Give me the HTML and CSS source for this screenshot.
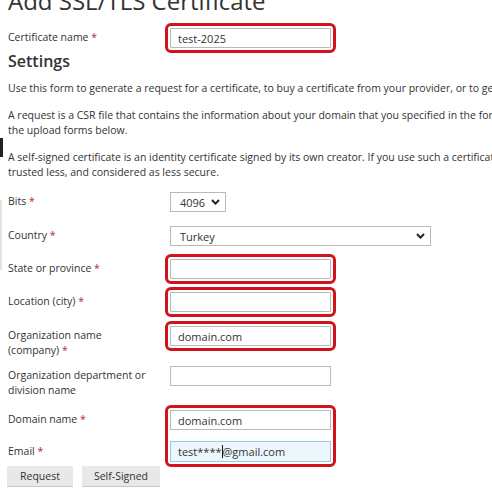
FILE: index.html
```html
<!DOCTYPE html>
<html>
<head>
<meta charset="utf-8">
<link rel="stylesheet" href="styles.css">
</head>
<body>
<div class="page">
  <h1 class="title">Add SSL/TLS Certificate</h1>

  <div class="form-grid top-grid">
    <label class="label">Certificate name <span class="req">*</span></label>
    <div class="field"><input class="input marked" type="text" value="test-2025"></div>
  </div>

  <h2 class="section">Settings</h2>

  <p class="text">Use this form to generate a request for a certificate, to buy a certificate from your provider, or to generate a self-signed certificate.</p>
  <p class="text">A request is a CSR file that contains the information about your domain that you specified in the form. You can submit it to a certificate authority,<br>the upload forms below.</p>
  <p class="text text-flag">A self-signed certificate is an identity certificate signed by its own creator. If you use such a certificate, your site visitors may see a warning that it is<br>trusted less, and considered as less secure.</p>

  <div class="form-grid main-grid">
    <label class="label">Bits <span class="req">*</span></label>
    <div class="field">
      <div class="select select-small"><span>4096</span>
        <svg class="chev" width="9" height="6" viewBox="0 0 9 6"><path d="M1 1 L4.5 4.6 L8 1" fill="none" stroke="#222" stroke-width="2"/></svg>
      </div>
    </div>

    <label class="label">Country <span class="req">*</span></label>
    <div class="field">
      <div class="select select-wide"><span>Turkey</span>
        <svg class="chev" width="9" height="6" viewBox="0 0 9 6"><path d="M1 1 L4.5 4.6 L8 1" fill="none" stroke="#222" stroke-width="2"/></svg>
      </div>
    </div>

    <label class="label">State or province <span class="req">*</span></label>
    <div class="field"><input class="input marked" type="text" value=""></div>

    <label class="label">Location (city) <span class="req">*</span></label>
    <div class="field"><input class="input marked" type="text" value=""></div>

    <label class="label">Organization name<br>(company) <span class="req">*</span></label>
    <div class="field"><input class="input marked" type="text" value="domain.com"></div>

    <label class="label">Organization department or<br>division name</label>
    <div class="field"><input class="input" type="text" value=""></div>

    <label class="label">Domain name <span class="req">*</span></label>
    <div class="field field-pair">
      <div class="pair marked">
        <input class="input" type="text" value="domain.com">
        <div class="input input-focus">test****<span class="caret"></span>@gmail.com</div>
      </div>
    </div>

    <label class="label label-email">Email <span class="req">*</span></label>
  </div>

  <div class="buttons">
    <button class="btn btn-request">Request</button>
    <button class="btn btn-self">Self-Signed</button>
  </div>
</div>
</body>
</html>
```

FILE: styles.css
```css
html, body {
  margin: 0;
  padding: 0;
  overflow: hidden;
  background: #fff;
}

body {
  font-family: "Open Sans", "Noto Sans", sans-serif;
  font-size: 10.5px;
  color: #333;
}

.page {
  position: relative;
  width: 800px;
  padding-left: 8px;
}

.page::before {
  content: "";
  position: absolute;
  left: 0;
  top: 152px;
  width: 3px;
  height: 19px;
  background: #222;
}

.page::after {
  content: "";
  position: absolute;
  left: 0;
  top: 214px;
  width: 2px;
  height: 70px;
  background: #e2e2e2;
}

.title {
  margin: -14px 0 0;
  font-size: 24px;
  font-weight: 400;
  line-height: 29px;
  color: #333;
}

.form-grid {
  display: grid;
  grid-template-columns: 162px auto;
  align-items: start;
  justify-content: start;
}

.top-grid {
  margin-top: 13px;
}

.main-grid {
  margin-top: 12px;
  grid-template-rows: 34px 33px 33px 34px 40px 44px 32px 24px;
}

.label {
  line-height: 15px;
  padding-top: 2px;
  white-space: nowrap;
}

.label-email {
  grid-column: 1;
  grid-row: 8;
}

.req {
  color: #c0202e;
}

.field-pair {
  grid-column: 2;
  grid-row: 7 / span 2;
}

.input {
  box-sizing: border-box;
  display: block;
  width: 161px;
  height: 20px;
  margin: 0;
  padding: 0 7px;
  border: 1px solid #b9b9b9;
  border-radius: 0;
  background: #fff;
  font-family: inherit;
  font-size: 11px;
  color: #333;
  outline: none;
}

.marked {
  outline: 3px solid #d0141d;
  outline-offset: 2px;
  border-radius: 1px;
}

.pair {
  display: flex;
  flex-direction: column;
  gap: 11px;
  width: 161px;
}

.input-focus {
  display: flex;
  align-items: center;
  height: 21px;
  background: #ecf7fc;
  border-color: #8fcde9;
  white-space: nowrap;
}

.caret {
  display: inline-block;
  width: 1px;
  height: 13px;
  background: #111;
}

.select {
  box-sizing: border-box;
  display: flex;
  align-items: center;
  justify-content: space-between;
  height: 20px;
  padding: 0 5px 0 9px;
  border: 1px solid #b9b9b9;
  background: #fff;
  font-size: 11px;
}

.select-small {
  width: 56px;
}

.select-wide {
  width: 261px;
}

.chev {
  display: block;
}

.section {
  margin: 3px 0 0;
  font-size: 16px;
  font-weight: 600;
  line-height: 20px;
  color: #333;
}

.text {
  margin: 10px 0 12px;
  line-height: 15px;
  white-space: nowrap;
}

.text + .text {
  margin-top: 0;
}

.buttons {
  display: flex;
  gap: 9px;
  margin-left: -1px;
}

.btn {
  box-sizing: border-box;
  height: 21px;
  padding: 0;
  border: 0;
  border-bottom: 1px solid #c8c8c8;
  background: #e8e8e8;
  font-family: inherit;
  font-size: 10.5px;
  color: #333;
}

.btn-request {
  width: 66px;
}

.btn-self {
  width: 78px;
}
```
